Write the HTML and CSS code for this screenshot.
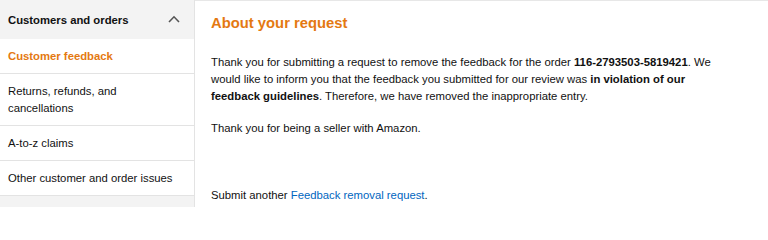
FILE: index.html
```html
<!DOCTYPE html>
<html lang="en">
<head>
<meta charset="utf-8">
<title>About your request</title>
<link rel="stylesheet" href="styles.css">
</head>
<body>
<div class="page">
  <nav class="sidebar">
    <div class="side-head">
      <span>Customers and orders</span>
      <svg class="chev" width="12" height="8" viewBox="0 0 12 8"><polyline points="1,7 6,1.8 11,7" fill="none" stroke="#555" stroke-width="1.6"/></svg>
    </div>
    <ul class="side-list">
      <li class="active">Customer feedback</li>
      <li>Returns, refunds, and cancellations</li>
      <li>A-to-z claims</li>
      <li>Other customer and order issues</li>
    </ul>
    <div class="side-next"></div>
  </nav>
  <main class="content">
    <h2 class="title">About your request</h2>
    <p class="p1">Thank you for submitting a request to remove the feedback for the order <b>116-2793503-5819421</b>. We would like to inform you that the feedback you submitted for our review was <b>in violation of our feedback guidelines</b>. Therefore, we have removed the inappropriate entry.</p>
    <p class="p2">Thank you for being a seller with Amazon.</p>
    <p class="p3">Submit another <a href="#">Feedback removal request</a>.</p>
  </main>
</div>
</body>
</html>
```

FILE: styles.css
```css
html, body {
  margin: 0;
  padding: 0;
  background: #fff;
}
body {
  font-family: "Liberation Sans", Arial, sans-serif;
  font-size: 11.3px;
  color: #111;
}
.page {
  display: flex;
  height: 207px;
  overflow: hidden;
}
.sidebar {
  width: 194px;
  flex: none;
  border-right: 1px solid #e3e3e3;
  display: flex;
  flex-direction: column;
}
.side-head {
  height: 39px;
  box-sizing: border-box;
  background: #f3f3f3;
  display: flex;
  align-items: center;
  justify-content: space-between;
  padding: 2px 14px 0 8px;
  font-weight: bold;
  line-height: 17px;
}
.chev {
  display: block;
  margin-top: -3px;
}
.side-list {
  list-style: none;
  margin: 0;
  padding: 0;
}
.side-list li {
  padding: 9px 16px 8px 8px;
  line-height: 17px;
  border-bottom: 1px solid #e3e3e3;
}
.side-list li.active {
  color: #e47911;
  font-weight: bold;
}
.side-next {
  flex: 1;
  background: #f3f3f3;
}
.content {
  flex: 1;
  border-top: 1px solid #e7e7e7;
  padding: 13px 16px 0 16px;
}
.title {
  margin: 1px 0 22px;
  font-size: 14.8px;
  line-height: 17px;
  color: #e47911;
  font-weight: bold;
}
.content p {
  margin: 0;
  line-height: 17px;
  width: 515px;
}
.content .p1 {
  margin-bottom: 15px;
}
.content .p3 {
  margin-top: 50px;
}
.content b {
  font-weight: bold;
}
.content a {
  color: #0066c0;
  text-decoration: none;
}
```
